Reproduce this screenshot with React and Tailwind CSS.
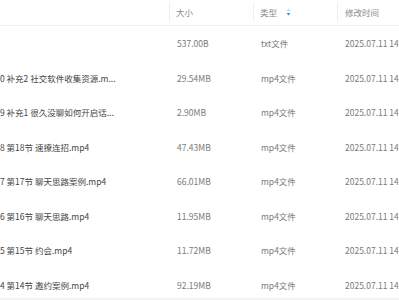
const rows = [
    { name: '', size: '537.00B', type: 'txt文件' },
    { name: '0 补充2 社交软件收集资源.m...', size: '29.54MB', type: 'mp4文件' },
    { name: '9 补充1 很久没聊如何开启话...', size: '2.90MB', type: 'mp4文件' },
    { name: '8 第18节 速撩连招.mp4', size: '47.43MB', type: 'mp4文件' },
    { name: '7 第17节 聊天思路案例.mp4', size: '66.01MB', type: 'mp4文件' },
    { name: '6 第16节 聊天思路.mp4', size: '11.95MB', type: 'mp4文件' },
    { name: '5 第15节 约会.mp4', size: '11.72MB', type: 'mp4文件' },
    { name: '4 第14节 邀约案例.mp4', size: '92.19MB', type: 'mp4文件' },
]

function SortIcon() {
    return (
        <svg width="5" height="8" viewBox="0 0 5 8" className="ml-[9px]">
            <path d="M2.5 0.5 L4.5 3 L0.5 3 Z" fill="#c6d9f1" />
            <path d="M0.5 5 L4.5 5 L2.5 7.5 Z" fill="#2f8ef0" />
        </svg>
    )
}

export default function App() {
    return (
        <div
            className="w-[399px] h-[300px] overflow-hidden bg-white text-[8.5px] whitespace-nowrap flex flex-col"
            style={{ fontFamily: '"Noto Sans CJK SC", "Noto Sans", sans-serif' }}
        >
            {/* header */}
            <div className="flex shrink-0 h-[26px] border-b border-[#f0f0f0] text-[#8a8a8a] pb-[1px]">
                <div className="w-[170px] border-r border-[#f0f0f0] my-[2px]" />
                <div className="w-[84px] border-r border-[#f0f0f0] flex items-center pl-[6px] my-[2px]">大小</div>
                <div className="w-[84px] border-r border-[#f0f0f0] flex items-center pl-[6px] my-[2px]">
                    类型
                    <SortIcon />
                </div>
                <div className="flex-1 flex items-center pl-[7px] my-[2px]">修改时间</div>
            </div>

            {/* rows */}
            <div className="flex-1 overflow-hidden">
                {rows.map((r, i) => (
                    <div key={i} className="flex items-center h-[34.5px] pt-[1px]">
                        <div className="w-[170px] text-[#454545] overflow-hidden">{r.name}</div>
                        <div className="w-[84px] pl-[7px] text-[#7a7a7a]">{r.size}</div>
                        <div className="w-[84px] pl-[7px] text-[#7a7a7a]">{r.type}</div>
                        <div className="flex-1 pl-[7px] text-[#7a7a7a] overflow-hidden">2025.07.11 14:32</div>
                    </div>
                ))}
            </div>

            {/* scrollbar edge */}
            <div className="h-[2px] shrink-0 bg-[#f2f2f2]" />
        </div>
    )
}
